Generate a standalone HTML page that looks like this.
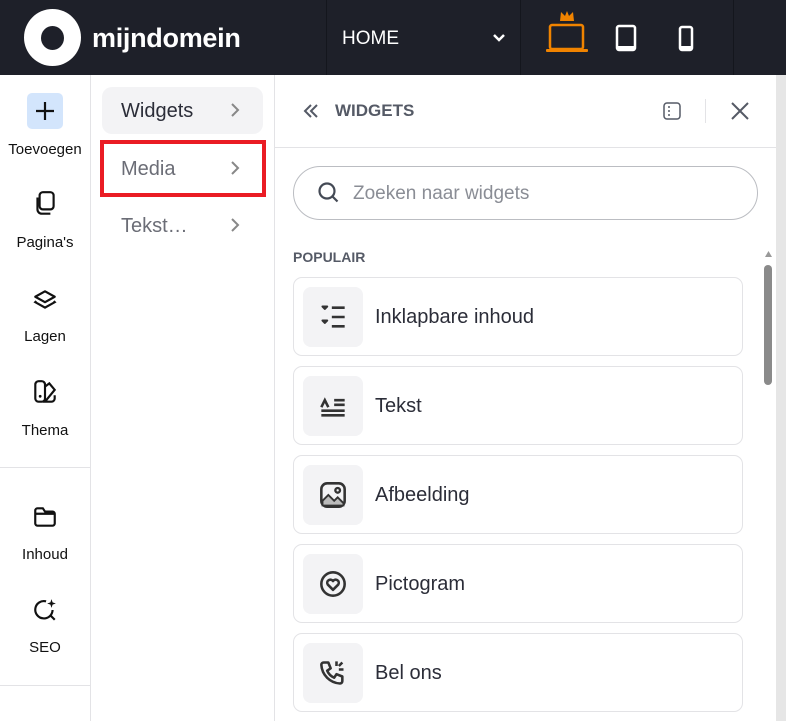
<!DOCTYPE html>
<html><head><meta charset="utf-8"><style>
*{box-sizing:border-box;margin:0;padding:0}
body{width:786px;height:721px;overflow:hidden;background:#fff;font-family:"Liberation Sans",sans-serif;position:relative;color:#2b2d38}
.hdr{position:absolute;left:0;top:0;width:786px;height:75px;background:#1e2029}
.vd{position:absolute;top:0;width:1px;height:75px;background:#14161d}
.abs{position:absolute}
.side{position:absolute;left:0;top:75px;width:91px;height:646px;border-right:1px solid #e3e3e6}
.si{position:absolute;left:0;width:90px;text-align:center;font-size:15px;color:#111}
.si svg{display:block;margin:0 auto 16px}
.col2{position:absolute;left:91px;top:75px;width:184px;height:646px;border-right:1px solid #e3e3e6}
.mi{position:absolute;left:11px;width:161px;height:47px;border-radius:10px;font-size:20px;color:#6b6d76;padding:13px 0 0 19px}
.mi .ch{position:absolute;right:22px;top:14px}
.card{position:absolute;left:293px;width:450px;height:79px;border:1px solid #e3e3e6;border-radius:9px}
.card .ib{position:absolute;left:9px;top:9px;width:60px;height:60px;background:#f3f3f5;border-radius:8px}
.card .ib svg{position:absolute;left:16px;top:16px}
.card .t{position:absolute;left:81px;top:28px;font-size:20px;color:#2b2d38}
</style></head><body>
<div class="hdr">
  <div class="abs" style="left:24px;top:9px;width:57px;height:57px;border-radius:50%;background:#fff"></div>
  <div class="abs" style="left:41px;top:26px;width:23px;height:24px;border-radius:50%;background:#1e2029"></div>
  <div class="abs" style="left:92px;top:23px;color:#fff;font-size:27px;font-weight:bold;letter-spacing:-0.3px">mijndomein</div>
  <div class="vd" style="left:326px"></div>
  <div class="abs" style="left:342px;top:28px;color:#fff;font-size:19px">HOME</div>
  <svg class="abs" style="left:492px;top:33px" width="14" height="10" viewBox="0 0 14 10"><path d="M2 2l5 5 5-5" stroke="#fff" stroke-width="2.5" fill="none"/></svg>
  <div class="vd" style="left:520px"></div>
  <svg class="abs" style="left:543px;top:9px" width="48" height="45" viewBox="0 0 48 45"><path d="M17 12l1-9 4 4 2-5 2 5 4-4 1 9z" fill="#f08300"/><rect x="7" y="16" width="33" height="24" rx="2" fill="none" stroke="#f08300" stroke-width="2.5"/><rect x="3" y="40" width="42" height="3" rx="1" fill="#f08300"/></svg>
  <svg class="abs" style="left:615px;top:24px" width="24" height="28" viewBox="0 0 24 28"><rect x="2" y="2" width="18" height="24" rx="2" fill="none" stroke="#fff" stroke-width="2.5"/><rect x="2" y="22" width="18" height="4" fill="#fff"/></svg>
  <svg class="abs" style="left:677px;top:25px" width="20" height="28" viewBox="0 0 20 28"><rect x="3" y="2" width="12" height="23" rx="2" fill="none" stroke="#fff" stroke-width="2.5"/><rect x="3" y="21" width="12" height="4" fill="#fff"/></svg>
  <div class="vd" style="left:733px"></div>
</div>
<div class="side">
  <div class="abs" style="left:27px;top:18px;width:36px;height:36px;background:#d3e5fc;border-radius:5px"></div>
  <svg class="abs" style="left:35px;top:26px" width="20" height="20" viewBox="0 0 20 20"><path d="M10 1v18M1 10h18" stroke="#111" stroke-width="2.2"/></svg>
  <div class="si" style="top:66px">Toevoegen</div>
  <div class="si" style="top:115px"><svg width="26" height="28" viewBox="0 0 24 26"><rect x="7" y="2" width="13" height="16" rx="3" fill="none" stroke="#111" stroke-width="2"/><path d="M5 7v11a4 4 0 0 0 4 4h8" fill="none" stroke="#111" stroke-width="2"/></svg>Pagina's</div>
  <div class="si" style="top:213px"><svg width="26" height="24" viewBox="0 0 24 22"><path d="M12 3l9 5-9 5-9-5z" fill="none" stroke="#111" stroke-width="2" stroke-linejoin="round"/><path d="M4 12l-1 1 9 5 9-5-1-1" fill="none" stroke="#111" stroke-width="2"/></svg>Lagen</div>
  <div class="si" style="top:303px"><svg width="26" height="28" viewBox="0 0 24 26"><rect x="3" y="3" width="9" height="19" rx="3" fill="none" stroke="#111" stroke-width="2"/><path d="M12 8l4-3 5 6-9 11h6a3 3 0 0 0 3-3v-3" fill="none" stroke="#111" stroke-width="2"/><circle cx="7.5" cy="17" r="1.3" fill="#111"/></svg>Thema</div>
  <div class="abs" style="left:0;top:392px;width:90px;height:1px;background:#e3e3e6"></div>
  <div class="si" style="top:429px"><svg width="26" height="26" viewBox="0 0 24 24"><path d="M3 6a2 2 0 0 1 2-2h5l2 3h7a2 2 0 0 1 2 2v9a2 2 0 0 1-2 2H5a2 2 0 0 1-2-2z M3 9h18" fill="none" stroke="#111" stroke-width="2"/></svg>Inhoud</div>
  <div class="si" style="top:522px"><svg width="26" height="26" viewBox="0 0 24 24"><path d="M13 4a8 8 0 1 0 6 8" fill="none" stroke="#111" stroke-width="2"/><path d="M17 17l4 4" stroke="#111" stroke-width="2"/><path d="M18 2l1 3 3 1-3 1-1 3-1-3-3-1 3-1z" fill="#111"/></svg>SEO</div>
  <div class="abs" style="left:0;top:610px;width:90px;height:1px;background:#e3e3e6"></div>
</div>
<div class="col2">
  <div class="mi" style="top:12px;background:#f3f3f5;color:#2b2d38">Widgets<svg class="ch" width="12" height="18" viewBox="0 0 12 18"><path d="M3 3l6 6-6 6" stroke="#888" stroke-width="2" fill="none"/></svg></div>
  <div class="abs" style="left:9px;top:65px;width:166px;height:57px;border:4px solid #ea1c24"></div>
  <div class="mi" style="top:70px">Media<svg class="ch" width="12" height="18" viewBox="0 0 12 18"><path d="M3 3l6 6-6 6" stroke="#888" stroke-width="2" fill="none"/></svg></div>
  <div class="mi" style="top:127px">Tekst…<svg class="ch" width="12" height="18" viewBox="0 0 12 18"><path d="M3 3l6 6-6 6" stroke="#888" stroke-width="2" fill="none"/></svg></div>
</div>
<svg class="abs" style="left:302px;top:103px" width="18" height="16" viewBox="0 0 18 16"><path d="M9 2L3 8l6 6M15 2L9 8l6 6" stroke="#555a66" stroke-width="2" fill="none"/></svg>
<div class="abs" style="left:335px;top:101px;font-size:17px;font-weight:bold;color:#555a66">WIDGETS</div>
<svg class="abs" style="left:662px;top:102px" width="20" height="18" viewBox="0 0 20 18"><rect x="2" y="1" width="16" height="16" rx="3" fill="none" stroke="#555a66" stroke-width="1.5"/><path d="M7 4v2M7 8v2M7 12v2" stroke="#555a66" stroke-width="1.5"/></svg>
<div class="abs" style="left:705px;top:99px;width:1px;height:24px;background:#e3e3e6"></div>
<svg class="abs" style="left:730px;top:101px" width="20" height="20" viewBox="0 0 20 20"><path d="M2 2l16 16M18 2L2 18" stroke="#555a66" stroke-width="2"/></svg>
<div class="abs" style="left:275px;top:147px;width:501px;height:1px;background:#e3e3e6"></div>
<div class="abs" style="left:293px;top:166px;width:465px;height:54px;border:1px solid #bbbdc2;border-radius:27px"></div>
<svg class="abs" style="left:317px;top:181px" width="24" height="24" viewBox="0 0 24 24"><circle cx="10" cy="10" r="7.5" fill="none" stroke="#444a55" stroke-width="2.2"/><path d="M15.5 15.5l5 5" stroke="#444a55" stroke-width="2.2"/></svg>
<div class="abs" style="left:353px;top:183px;font-size:19px;color:#8a8d95">Zoeken naar widgets</div>
<div class="abs" style="left:293px;top:249px;font-size:14px;font-weight:bold;color:#555a66">POPULAIR</div>
<div class="abs" style="left:776px;top:75px;width:10px;height:646px;background:#e6e6e6"></div>
<svg class="abs" style="left:764px;top:250px" width="9" height="8" viewBox="0 0 9 8"><path d="M4.5 1L8 7H1z" fill="#999"/></svg>
<div class="abs" style="left:764px;top:265px;width:8px;height:120px;border-radius:4px;background:#8a8a8a"></div>

<div class="card" style="top:277px"><div class="ib"><svg width="28" height="28" viewBox="0 0 24 24"><path d="M3 3l2 2 2-2zM3 15l2 2 2-2z" fill="#333" stroke="#333" stroke-width="1.8" stroke-linejoin="round"/><path d="M11 4h11M11 12h11M11 20h11" stroke="#333" stroke-width="2.2"/></svg></div><div class="t">Inklapbare inhoud</div></div>
<div class="card" style="top:366px"><div class="ib"><svg width="28" height="28" viewBox="0 0 24 24"><path d="M2 13l3-6 3 6M13 7h9M13 11h9M2 16h20M2 20h20" stroke="#333" stroke-width="2.2" fill="none"/></svg></div><div class="t">Tekst</div></div>
<div class="card" style="top:455px"><div class="ib"><svg width="28" height="28" viewBox="0 0 24 24"><rect x="2" y="2" width="20" height="20" rx="5" fill="none" stroke="#333" stroke-width="2.2"/><path d="M3 17l5-5 5 5 3-3 5 5v2H3z" fill="#bbb" stroke="#333" stroke-width="1.6"/><circle cx="16" cy="8" r="2" fill="none" stroke="#333" stroke-width="2"/></svg></div><div class="t">Afbeelding</div></div>
<div class="card" style="top:544px"><div class="ib"><svg width="28" height="28" viewBox="0 0 24 24"><circle cx="12" cy="12" r="10" fill="none" stroke="#333" stroke-width="2.2"/><path d="M12 17l-4.5-4.5a2.5 2.5 0 0 1 4.5-3 2.5 2.5 0 0 1 4.5 3z" fill="none" stroke="#333" stroke-width="2.2" stroke-linejoin="round"/></svg></div><div class="t">Pictogram</div></div>
<div class="card" style="top:633px"><div class="ib"><svg width="28" height="28" viewBox="0 0 24 24"><path d="M4 3h4l2 5-3 2a11 11 0 0 0 6 6l2-3 5 2v4a2 2 0 0 1-2 2A17 17 0 0 1 2 5a2 2 0 0 1 2-2z" fill="none" stroke="#333" stroke-width="2.2" stroke-linejoin="round"/><path d="M15 2v4M21 9h-4M20 3l-3 3" stroke="#333" stroke-width="2.2"/></svg></div><div class="t">Bel ons</div></div>
</body></html>
